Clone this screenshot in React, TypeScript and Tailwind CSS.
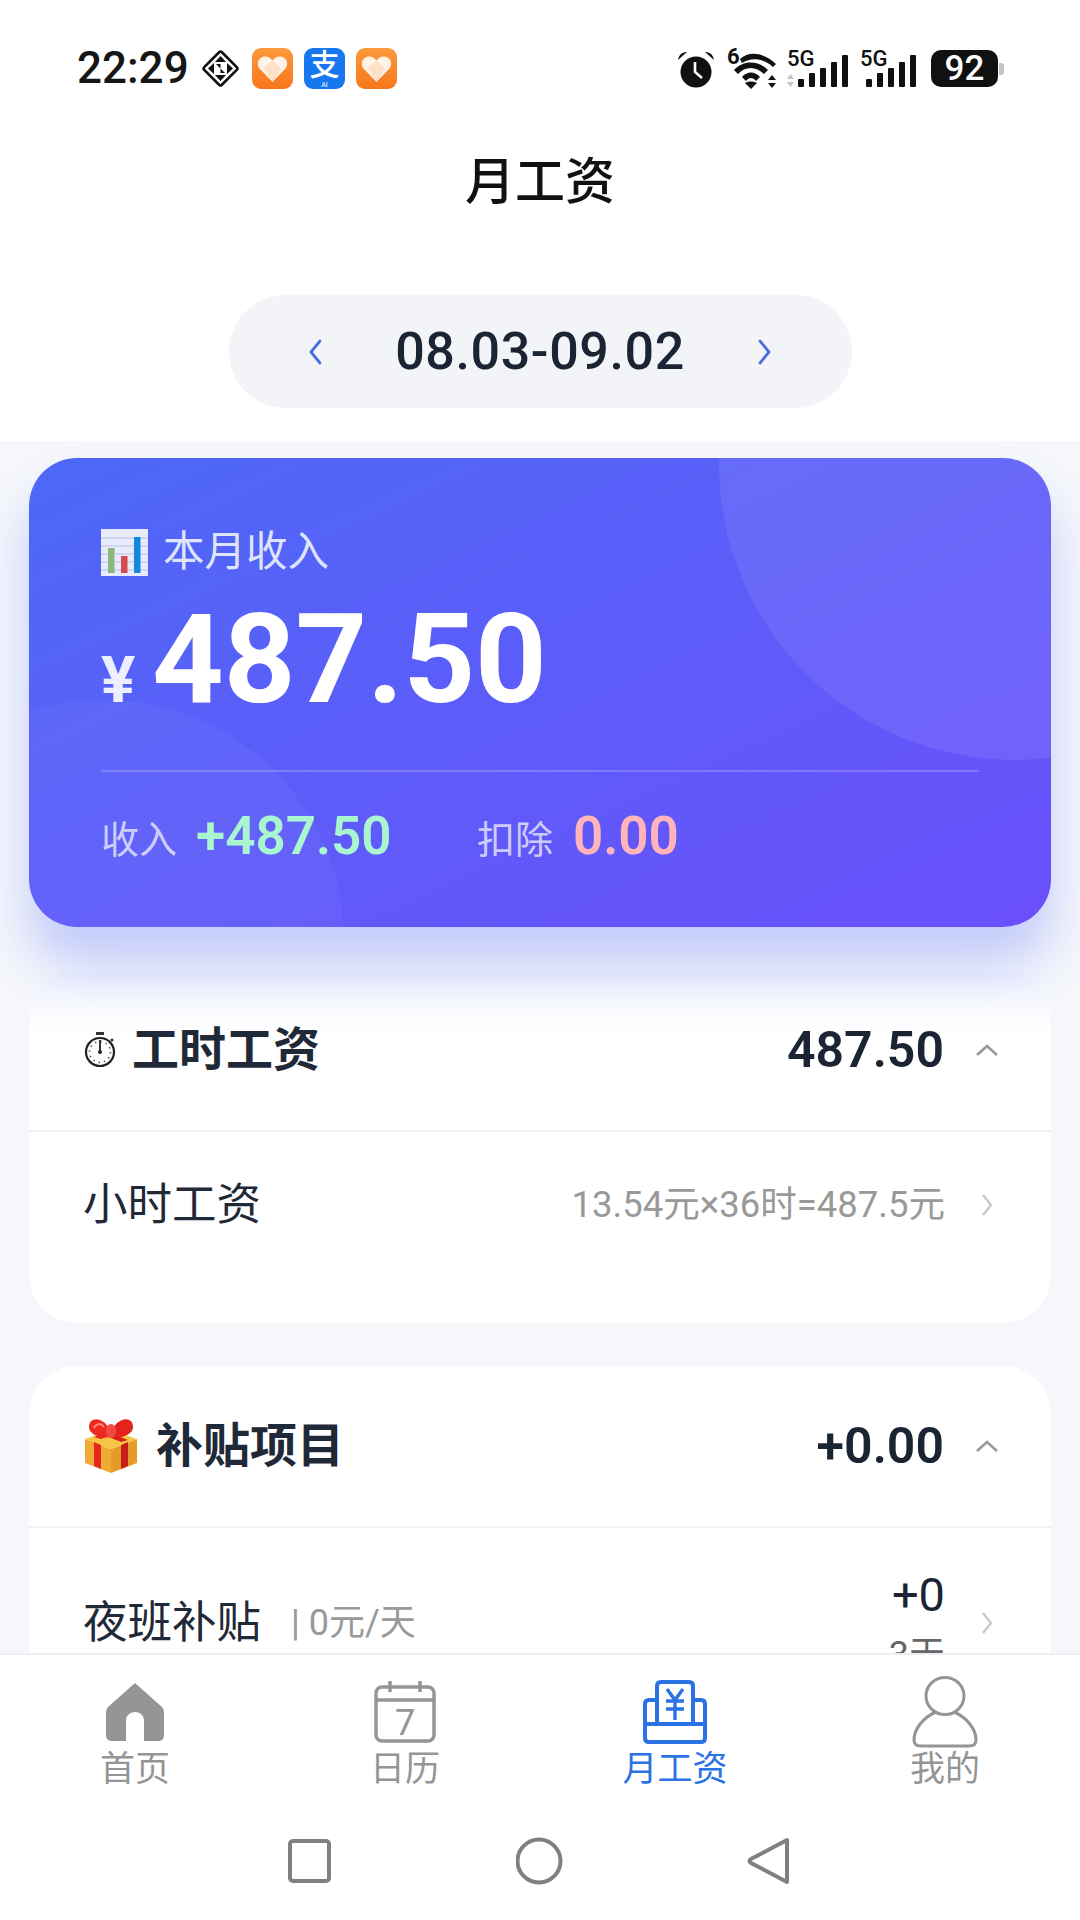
import React from 'react';

const HeartApp = () => (
    <svg width="41" height="41" viewBox="0 0 41 41">
        <defs>
            <linearGradient id="hbg" x1="0" y1="0" x2="0" y2="1">
                <stop offset="0" stopColor="#fb9a3c" />
                <stop offset="1" stopColor="#f9761c" />
            </linearGradient>
        </defs>
        <rect width="41" height="41" rx="9" fill="url(#hbg)" />
        <path d="M20.5 34 L7.5 20.5 C3.5 15.5 7 8.5 13 8.5 C16.3 8.5 19 10.3 20.5 12.5 C22 10.3 24.7 8.5 28 8.5 C34 8.5 37.5 15.5 33.5 20.5 Z" fill="#fff3e8" />
        <path d="M20.5 12.5 L29 21 L20.5 34 L12 20 Z" fill="#fcd9b8" opacity="0.7" />
    </svg>
);

const AlipayApp = () => (
    <div className="w-[41px] h-[41px] rounded-[9px] bg-[#1677ee] flex flex-col items-center text-white relative overflow-hidden">
        <span className="text-[30px] leading-[33px] font-medium">支</span>
        <span className="text-[7px] leading-[8px]">AI</span>
    </div>
);

const DiamondIcon = () => (
    <svg width="41" height="41" viewBox="0 0 41 41">
        <rect x="8" y="8" width="25" height="25" rx="2" transform="rotate(45 20.5 20.5)" fill="none" stroke="#111" strokeWidth="2.6" />
        <path d="M20.5 8 L26 14 H15 Z M8 20.5 L14 15 V26 Z M33 20.5 L27 15 V26 Z M20.5 33 L26 27 H15 Z M16 16 H20.5 V20.5 Z M25 25 H20.5 V20.5 Z" fill="#111" />
    </svg>
);

const AlarmIcon = () => (
    <svg width="38" height="38" viewBox="0 0 38 38">
        <circle cx="19" cy="22" r="15.5" fill="#111" />
        <path d="M1 10 C2 4 6 2 10 2 Z M37 10 C36 4 32 2 28 2 Z" fill="#111" />
        <path d="M18 12 V22 L25 28" fill="none" stroke="#fff" strokeWidth="2.6" />
    </svg>
);

const WifiIcon = () => (
    <div className="relative w-[52px] h-[40px]">
        <span className="absolute left-0 top-[-5px] text-[22px] leading-[26px] font-bold text-[#111]">6</span>
        <svg width="52" height="40" viewBox="0 0 52 40">
            <path d="M13 10 C22 2 36 3 49 15 L46 18 C36 9 24 8 15 14 Z" fill="#111" />
            <path d="M7 21 C16 11 31 11 41 21 L37 25 C29 17 18 17 11 25 Z" fill="#111" />
            <path d="M15 28 C20 22 28 22 33 28 L29 32 C26 28 22 28 19 32 Z" fill="#111" />
            <path d="M24 40 L18 34 C21 32 27 32 30 34 Z" fill="#111" />
            <path d="M45 26 L49 31 H41 Z M45 39 L41 34 H49 Z" fill="#111" />
        </svg>
    </div>
);

// five bars, the first signal icon has the data arrows in front of them
const SignalIcon = ({ arrows }: { arrows?: boolean }) => {
    const start = arrows ? 11 : 6;
    const heights = [8, 14, 19, 25, 32];
    return (
        <div className={`relative h-[36px] ${arrows ? 'w-[62px]' : 'w-[57px]'}`}>
            <span className="absolute left-0 top-[-5px] text-[22px] leading-[26px] font-medium text-[#111]">5G</span>
            <svg width={arrows ? 62 : 57} height="36" viewBox={`0 0 ${arrows ? 62 : 57} 36`}>
                {heights.map((h, i) => (
                    <rect key={i} x={start + i * 11} y={36 - h} width="6" height={h} rx="1" fill="#111" />
                ))}
                {arrows && <path d="M3.5 23 L7 28 H0 Z M3.5 36 L0 31 H7 Z" fill="#c4c4c4" />}
            </svg>
        </div>
    );
};

const BatteryIcon = () => (
    <div className="flex items-center">
        <div className="w-[67px] h-[37px] rounded-[10px] bg-[#111] text-white text-[35px] leading-[37px] font-medium text-center">92</div>
        <div className="w-[5px] h-[12px] ml-[1px] rounded-r-[3px] bg-[#c4c4c4]" />
    </div>
);

const ChartEmoji = () => (
    <svg width="47" height="47" viewBox="0 0 47 47">
        <rect width="47" height="47" fill="#e8ebfb" />
        <path d="M0 9 H47 M0 17 H47 M0 25 H47 M0 33 H47 M0 41 H47" stroke="#b9bfe0" strokeWidth="1" />
        <rect x="7" y="19" width="6.5" height="25" fill="#8ab77a" />
        <rect x="20" y="27" width="6.5" height="17" fill="#d8484f" />
        <rect x="33" y="8" width="6.5" height="36" fill="#1287df" />
    </svg>
);

const StopwatchEmoji = () => (
    <svg width="32" height="38" viewBox="0 0 32 38">
        <rect x="12" y="1" width="8" height="3" fill="#333" />
        <circle cx="28" cy="9" r="1.6" fill="#333" />
        <circle cx="16" cy="21" r="14" fill="#fdfdfd" stroke="#222" strokeWidth="2.2" />
        <circle cx="16" cy="21" r="10.5" fill="none" stroke="#555" strokeWidth="1.6" strokeDasharray="1.4 4.1" />
        <path d="M16 9 V21" stroke="#222" strokeWidth="1.8" />
        <circle cx="16" cy="21" r="2" fill="#222" />
    </svg>
);

const GiftEmoji = () => (
    <svg width="54" height="54" viewBox="0 0 54 54">
        <path d="M1 20 L27 30 V54 L1 44 Z" fill="#f0aa35" />
        <path d="M53 20 L27 30 V54 L53 44 Z" fill="#e49b2a" />
        <path d="M1 20 L27 11 L53 20 L27 30 Z" fill="#f7c644" />
        <path d="M10 23 L17 26 V50 L10 47 Z" fill="#e8261d" />
        <path d="M44 23 L37 26 V50 L44 47 Z" fill="#c91d18" />
        <path d="M17 15 L37 23 L44 21 L24 13 Z" fill="#d9221a" />
        <path d="M10 18 L30 10 L37 12 L17 20 Z" fill="#e8261d" />
        <path d="M27 13 C20 -3 5 -3 5 8 C5 15 16 20 27 18 Z" fill="#ed2a22" />
        <path d="M27 13 C34 -3 49 -3 49 8 C49 15 38 20 27 18 Z" fill="#e3241c" />
        <path d="M10 9 C12 4 17 4 20 8" fill="none" stroke="#ff8a80" strokeWidth="2" />
        <ellipse cx="27" cy="12" rx="5" ry="7" fill="#f14a40" />
    </svg>
);

const HomeIcon = () => (
    <svg width="58" height="58" viewBox="0 0 58 58">
        <path fillRule="evenodd" d="M29 0 L56 24 Q58 26 58 29 V52 Q58 58 52 58 H38 V38 C38 26 20 26 20 38 V58 H6 Q0 58 0 52 V29 Q0 26 2 24 Z" fill="#959595" />
    </svg>
);

const CalendarIcon = () => (
    <svg width="62" height="63" viewBox="0 0 62 63">
        <rect x="2" y="7" width="58" height="54" rx="6" fill="none" stroke="#959595" strokeWidth="3.5" />
        <path d="M2 20 H60 M16 1 V12 M46 1 V12" stroke="#959595" strokeWidth="3.5" />
        <text x="31" y="55" textAnchor="middle" fontSize="36" fill="#959595">7</text>
    </svg>
);

const SalaryIcon = () => (
    <svg width="64" height="64" viewBox="0 0 64 64">
        <path d="M14 44 V6 Q14 2 18 2 H46 Q50 2 50 6 V44" fill="none" stroke="#2b72e4" strokeWidth="4" />
        <path d="M14 20 H6 Q2 20 2 24 V58 Q2 62 6 62 H58 Q62 62 62 58 V24 Q62 20 58 20 H50" fill="none" stroke="#2b72e4" strokeWidth="4" />
        <path d="M2 44 H62" stroke="#2b72e4" strokeWidth="4" />
        <path d="M24 9 L32 20 L40 9 M23 21 H41 M23 29 H41 M32 20 V40" fill="none" stroke="#2b72e4" strokeWidth="3.4" />
    </svg>
);

const PersonIcon = () => (
    <svg width="66" height="72" viewBox="0 0 66 72">
        <ellipse cx="33" cy="20" rx="19" ry="18.5" fill="none" stroke="#959595" strokeWidth="3" />
        <path d="M24 36 C10 42 2 54 2 64 Q2 70 9 70 H57 Q64 70 64 64 C64 54 56 42 42 36" fill="none" stroke="#959595" strokeWidth="3" />
    </svg>
);

const ChevronUp = () => (
    <svg width="24" height="14" viewBox="0 0 24 14">
        <path d="M2 12 L12 3 L22 12" fill="none" stroke="#999" strokeWidth="2.6" />
    </svg>
);

const ChevronRight = () => (
    <svg width="12" height="24" viewBox="0 0 12 24">
        <path d="M2 2 L10 12 L2 22" fill="none" stroke="#c8c8c8" strokeWidth="2.4" />
    </svg>
);

const PillChevron = ({ dir }: { dir: 'left' | 'right' }) => (
    <svg width="14" height="26" viewBox="0 0 14 26">
        <path d={dir === 'left' ? 'M12 2 L3 13 L12 24' : 'M2 2 L11 13 L2 24'} fill="none" stroke="#4a6de0" strokeWidth="2.8" strokeLinecap="round" />
    </svg>
);

const CardHeader = ({ icon, title, value, gap }: { icon: React.ReactNode; title: string; value: string; gap: string }) => (
    <div className="h-[162px] shrink-0 flex items-center pl-[55px] pr-[52px] border-b-2 border-[#f0f2f5]">
        <div className={`flex items-center ${gap}`}>
            {icon}
            <span className="text-[47px] font-bold text-[#1f2937]">{title}</span>
        </div>
        <span className="ml-auto text-[50px] font-semibold text-[#1a2433]">{value}</span>
        <div className="ml-[31px] flex items-center"><ChevronUp /></div>
    </div>
);

const tabs = [
    { label: '首页', icon: <HomeIcon /> },
    { label: '日历', icon: <CalendarIcon /> },
    { label: '月工资', icon: <SalaryIcon />, active: true },
    { label: '我的', icon: <PersonIcon /> },
];

export default function App() {
    return (
        <div className="w-[1080px] h-[1920px] flex flex-col overflow-hidden bg-white [font-family:Roboto,'Noto_Sans_CJK_SC',sans-serif]">
            {/* top white part */}
            <div className="h-[441px] shrink-0 flex flex-col items-center">
                <div className="w-full h-[136px] shrink-0 flex items-start justify-between pt-[48px] pl-[77px] pr-[76px]">
                    <div className="flex items-center gap-[11px] h-[41px]">
                        <span className="text-[44px] leading-[41px] font-medium text-[#161616] w-[112px]">22:29</span>
                        <DiamondIcon />
                        <HeartApp />
                        <AlipayApp />
                        <HeartApp />
                    </div>
                    <div className="flex items-center h-[41px]">
                        <AlarmIcon />
                        <div className="ml-[12px]"><WifiIcon /></div>
                        <div className="ml-[8px]"><SignalIcon arrows /></div>
                        <div className="ml-[11px]"><SignalIcon /></div>
                        <div className="ml-[14px]"><BatteryIcon /></div>
                    </div>
                </div>
                <div className="h-[92px] shrink-0 flex items-center text-[50px] font-medium text-[#111]">月工资</div>
                <div className="mt-[67px] w-[623px] h-[113px] shrink-0 rounded-full bg-[#f2f4f8] flex items-center justify-between px-[79px]">
                    <PillChevron dir="left" />
                    <span className="text-[52px] font-medium tracking-[0.6px] text-[#1a2433]">08.03-09.02</span>
                    <PillChevron dir="right" />
                </div>
            </div>

            {/* scrolling content */}
            <div className="h-[1212px] shrink-0 bg-[#f5f7fb] px-[29px] pt-[17px] flex flex-col gap-[43px] overflow-hidden">
                <div className="relative h-[469px] shrink-0 rounded-[48px] bg-linear-to-br from-[#4c68f7] to-[#6a4ffb] shadow-[0_38px_50px_rgba(79,102,247,0.3)] px-[72px] pt-[71px]">
                    <div className="absolute inset-0 rounded-[48px] overflow-hidden">
                        <div className="absolute left-[690px] top-[-290px] w-[592px] h-[592px] rounded-full bg-white/8" />
                        <div className="absolute left-[-165px] top-[242px] w-[480px] h-[480px] rounded-full bg-white/4" />
                    </div>
                    <div className="relative flex items-center gap-[15px] h-[47px] text-[41.5px] text-[#dfe4fd]">
                        <ChartEmoji />
                        <span>本月收入</span>
                    </div>
                    <div className="relative flex items-baseline mt-[14px] h-[140px]">
                        <span className="text-[64px] font-bold text-white/90 w-[51px]">¥</span>
                        <span className="text-[125px] leading-[140px] font-bold text-white">487.50</span>
                    </div>
                    <div className="relative mt-[40px] h-[2px] bg-white/20" />
                    <div className="relative flex items-center mt-[35px] h-[60px]">
                        <span className="text-[38px] text-white/70 w-[95px] mt-[6px]">收入</span>
                        <span className="text-[53px] font-semibold text-[#a9f5cf] w-[281px]">+487.50</span>
                        <span className="text-[38px] text-white/70 w-[96px] mt-[6px]">扣除</span>
                        <span className="text-[53px] font-semibold text-[#ffb3ba]">0.00</span>
                    </div>
                </div>

                <div className="h-[353px] shrink-0 rounded-[48px] bg-linear-to-b from-[#f0f3fd] to-white to-[18%] flex flex-col">
                    <CardHeader icon={<StopwatchEmoji />} title="工时工资" value="487.50" gap="gap-[16px]" />
                    <div className="h-[142px] shrink-0 flex items-center pt-[4px] pl-[54px] pr-[58px]">
                        <span className="text-[44.5px] text-[#1f2937]">小时工资</span>
                        <span className="ml-auto text-[36.5px] text-[#999]">13.54元×36时=487.5元</span>
                        <div className="ml-[36px] flex items-center"><ChevronRight /></div>
                    </div>
                </div>

                <div className="h-[420px] shrink-0 rounded-t-[48px] bg-white flex flex-col">
                    <CardHeader icon={<GiftEmoji />} title="补贴项目" value="+0.00" gap="gap-[18px]" />
                    <div className="h-[192px] shrink-0 flex items-center pb-[2px] pl-[54px] pr-[58px]">
                        <span className="text-[44.5px] text-[#1f2937]">夜班补贴</span>
                        <span className="ml-[30px] text-[36px] text-[#999]">| 0元/天</span>
                        <div className="ml-auto flex flex-col items-end pt-[6px]">
                            <span className="text-[47px] leading-[44px] text-[#1a2433]">+0</span>
                            <span className="text-[36px] leading-[48px] mt-[14px] text-[#666]">3天</span>
                        </div>
                        <div className="ml-[36px] flex items-center"><ChevronRight /></div>
                    </div>
                </div>
            </div>

            {/* tab bar */}
            <div className="relative z-20 h-[137px] shrink-0 bg-white border-t-2 border-[#eceef3] grid grid-cols-4 pt-[21px]">
                {tabs.map((tab) => (
                    <div key={tab.label} className="flex flex-col items-center">
                        <div className="h-[71px] flex items-center justify-center">{tab.icon}</div>
                        <span className={`mt-[3px] text-[35px] leading-[40px] ${tab.active ? 'text-[#2b72e4]' : 'text-[#959595]'}`}>{tab.label}</span>
                    </div>
                ))}
            </div>

            {/* system nav */}
            <div className="flex-1 relative z-20 bg-white flex items-center justify-center gap-[181px] pt-[12px]">
                <svg width="48" height="48" viewBox="0 0 48 48">
                    <rect x="3" y="4" width="39" height="40" rx="3" fill="none" stroke="#808080" strokeWidth="4" />
                </svg>
                <svg width="48" height="48" viewBox="0 0 48 48">
                    <circle cx="23" cy="24" r="21.5" fill="none" stroke="#808080" strokeWidth="4" />
                </svg>
                <svg width="48" height="48" viewBox="0 0 48 48">
                    <path d="M42 3 V45 L6 26 Q3 24 6 22 Z" fill="none" stroke="#808080" strokeWidth="4" strokeLinejoin="round" />
                </svg>
            </div>
        </div>
    );
}
